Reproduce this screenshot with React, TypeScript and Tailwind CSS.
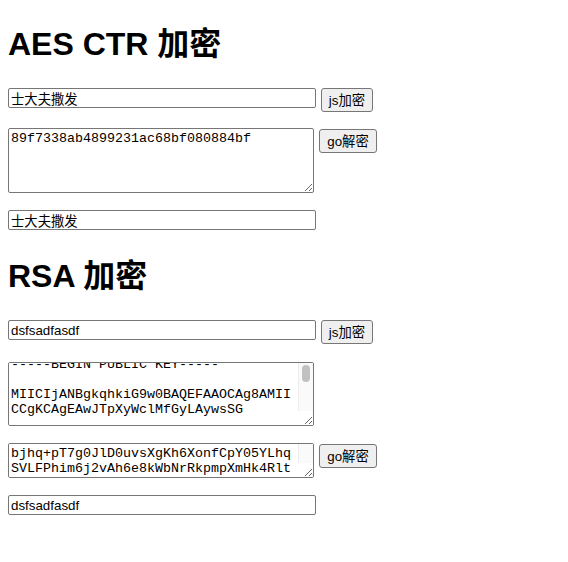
import { useEffect, useRef } from "react"

const sans = "font-['Liberation_Sans','Noto_Sans_CJK_SC',sans-serif]"
const mono = "font-['Liberation_Mono','Noto_Sans_CJK_SC',monospace]"

const inputCls = `${sans} box-border h-[20px] w-[308px] rounded-[2px] border border-solid border-[#767676] bg-white px-[2px] text-[13.33px] leading-[15px] text-black outline-none`
const btnCls = `${sans} box-border h-[24px] rounded-[3px] border border-solid border-[#767676] bg-[#efefef] px-[6px] text-[13.33px] leading-[15px] text-black`
const areaCls = `${mono} box-border block w-[306px] rounded-[2px] border border-solid border-[#767676] bg-white pl-[2px] py-[2px] text-[13.33px] leading-[15px] text-black outline-none`

const pubKey = [
  "-----BEGIN PUBLIC KEY-----",
  "MIICIjANBgkqhkiG9w0BAQEFAAOCAg8AMIICCgKCAgEAwJTpXyWclMfGyLAywsSG",
  "k3Jx0Qv8mY2pL7dN4fR6tW1cH9sA5bE3gK0uZ2oI8yV7nT4rM6qX1wD5jF9hC2lB",
  "pS8eG3vN7aU0iO4kY6tR1mW9zQ5xL2cJ8dH3fB7gK0nV4sE6yT1uA9oI5rM2qP7",
  "wX3jF8hC0lD6bN4vG1eS9kY5tR2mU7zQ3xL8cJ0dH6fB1gK4nV9sE2yT7uA5oI3",
  "-----END PUBLIC KEY-----",
].join("\n\n")

const cipher =
  "bjhq+pT7g0JlD0uvsXgKh6XonfCpY05YLhqSVLFPhim6j2vAh6e8kWbNrRkpmpXmHk4Rlt9aQ2xW7cVb3NmZ1kLp0sD8fGhJ4yU6iO5eR2tT9wQ=="

// fake mac-style scrollbar laid over the textarea's right edge
function ScrollTrack({ thumb }: { thumb: boolean }) {
  return (
    <div className="pointer-events-none absolute bottom-[15px] right-px top-px w-[15px] border-l border-solid border-[#ececec] bg-[#fafafa]">
      {thumb && <div className="ml-[3px] mt-[2px] h-[17px] w-[8px] rounded-full bg-[#c1c1c1]" />}
    </div>
  )
}

export default function App() {
  const keyRef = useRef<HTMLTextAreaElement>(null)

  useEffect(() => {
    if (keyRef.current) keyRef.current.scrollTop = 8
  }, [])

  return (
    <div className={`${sans} flex min-h-[562px] flex-col bg-white pl-2 text-black`}>
      <h1 className="pt-[26px] text-[32px] font-bold leading-[37px]">AES CTR 加密</h1>

      <div className="mt-[25px] flex items-start gap-[5px]">
        <input className={inputCls} defaultValue="士大夫撒发" />
        <button className={`${btnCls} w-[52px]`}>js加密</button>
      </div>

      <div className="mt-[16px] flex items-start gap-[5px]">
        <textarea
          className={`${areaCls} h-[65px] pr-[2px] resize`}
          spellCheck={false}
          defaultValue="89f7338ab4899231ac68bf080884bf"
        />
        <button className={`${btnCls} mt-px w-[58px]`}>go解密</button>
      </div>

      <div className="mt-[17px] flex">
        <input className={inputCls} defaultValue="士大夫撒发" />
      </div>

      <h1 className="mt-[28px] text-[32px] font-bold leading-[37px]">RSA 加密</h1>

      <div className="mt-[25px] flex items-start gap-[5px]">
        <input className={inputCls} defaultValue="dsfsadfasdf" />
        <button className={`${btnCls} w-[52px]`}>js加密</button>
      </div>

      <div className="mt-[18px] flex">
        <div className="relative">
          <textarea
            ref={keyRef}
            className={`${areaCls} h-[64px] overflow-y-scroll pr-[17px]`}
            spellCheck={false}
            defaultValue={pubKey}
          />
          <ScrollTrack thumb />
        </div>
      </div>

      <div className="mt-[17px] flex items-start gap-[5px]">
        <div className="relative">
          <textarea
            className={`${areaCls} h-[35px] overflow-y-scroll pr-[17px]`}
            spellCheck={false}
            defaultValue={cipher}
          />
          <ScrollTrack thumb={false} />
        </div>
        <button className={`${btnCls} mt-px w-[58px]`}>go解密</button>
      </div>

      <div className="mt-[17px] flex">
        <input className={inputCls} defaultValue="dsfsadfasdf" />
      </div>
    </div>
  )
}
